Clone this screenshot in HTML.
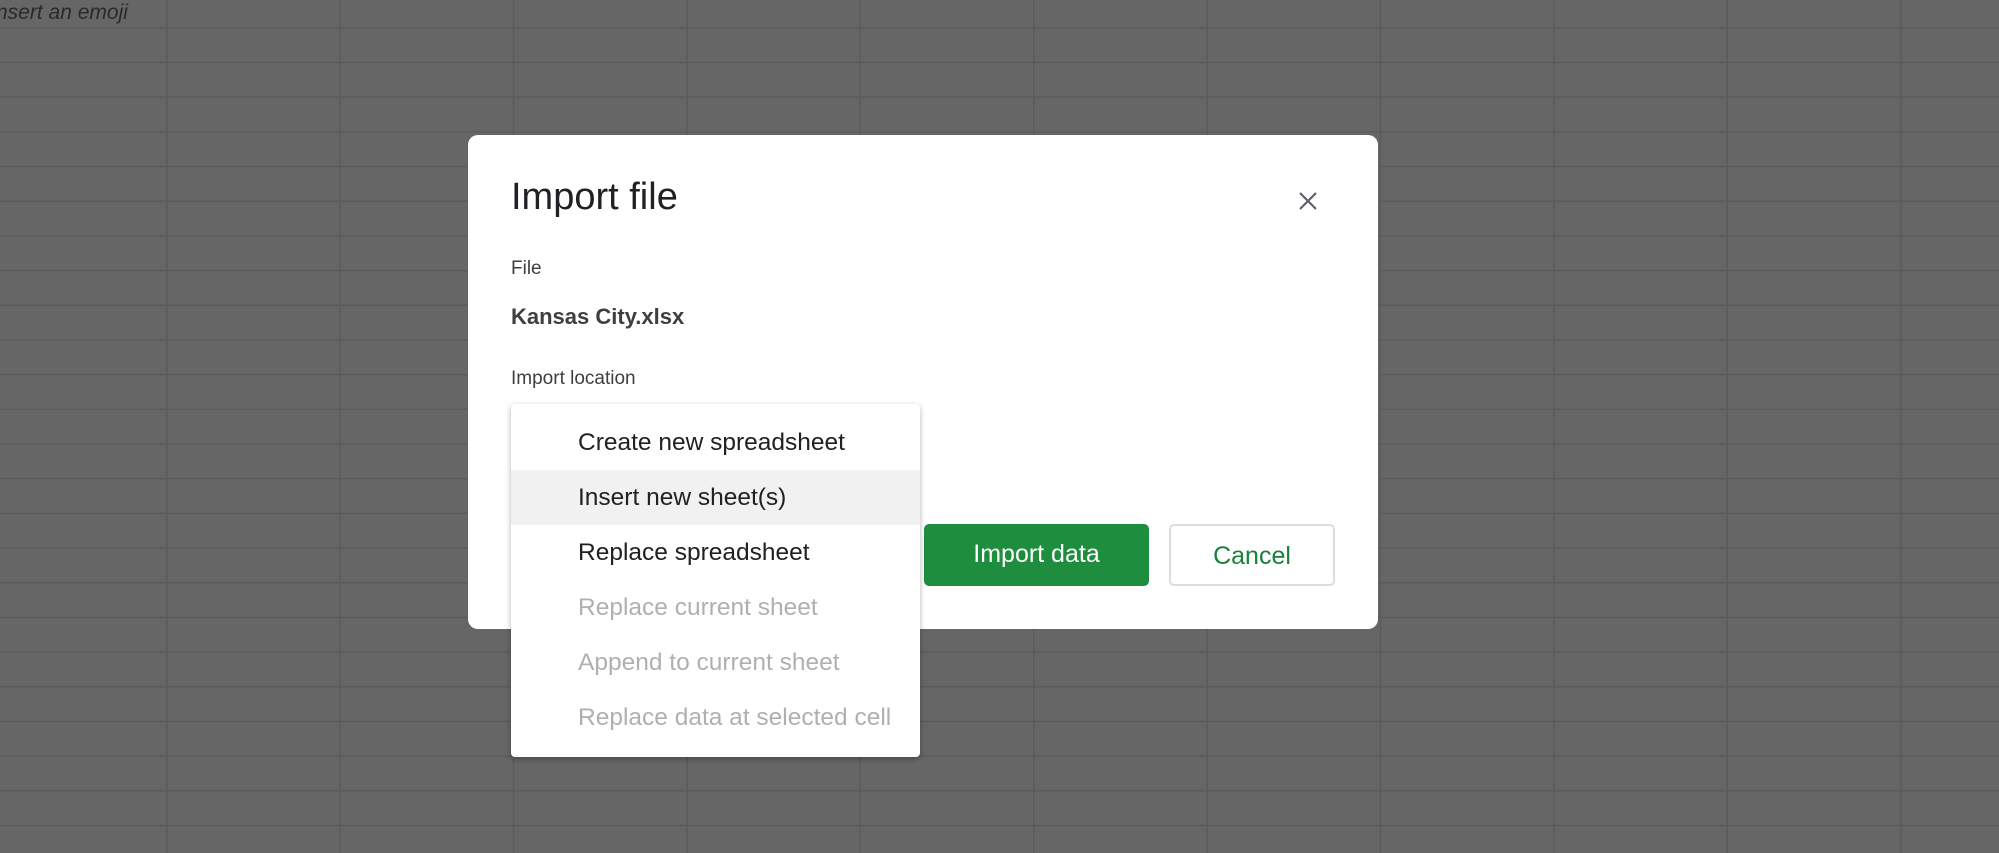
<!DOCTYPE html>
<html><head><style>
html,body{margin:0;padding:0}
body{width:1999px;height:853px;position:relative;overflow:hidden;background:#666;font-family:"Liberation Sans",sans-serif;
background-image:linear-gradient(to right,#5b5b5b 1.5px,transparent 1.5px),linear-gradient(to bottom,#5b5b5b 1.5px,transparent 1.5px);
background-size:173.4px 34.7px;background-position:166px 27px;}
.t{position:absolute;white-space:nowrap}
#dlg{position:absolute;left:468px;top:135px;width:910px;height:494px;background:#fff;border-radius:10px}
#menu{position:absolute;left:511px;top:404px;width:409px;height:353px;background:#fff;border-radius:4px;box-shadow:0 2px 6px rgba(0,0,0,.3)}
.it{position:absolute;left:0;width:409px;height:55px;line-height:55px;padding-left:67px;box-sizing:border-box;font-size:24.5px;color:#202124}
.dis{color:#b0b0b0}
.btn{position:absolute;top:524px;height:62px;line-height:60px;text-align:center;font-size:25px;border-radius:5px;box-sizing:border-box}
</style></head><body>
<div class="t" style="left:-4px;top:1px;font-size:21px;font-style:italic;color:#2a2a2a">nsert an emoji</div>
<div id="dlg"></div>
<div class="t" style="left:511px;top:176px;font-size:38px;color:#202124">Import file</div>
<svg style="position:absolute;left:1298px;top:191px" width="20" height="20"><path d="M2 2L18 18M18 2L2 18" stroke="#5f6368" stroke-width="2.2"/></svg>
<div class="t" style="left:511px;top:258px;font-size:19px;color:#3c4043">File</div>
<div class="t" style="left:511px;top:304px;font-size:22px;font-weight:bold;color:#3c4043">Kansas City.xlsx</div>
<div class="t" style="left:511px;top:368px;font-size:19px;color:#3c4043">Import location</div>
<div class="btn" style="left:924px;width:225px;background:#1e8e3e;color:#fff">Import data</div>
<div class="btn" style="left:1169px;width:166px;border:2px solid #dadce0;color:#188038;background:#fff">Cancel</div>
<div id="menu">
<div class="it" style="top:11px">Create new spreadsheet</div>
<div class="it" style="top:66px;background:#f1f1f1">Insert new sheet(s)</div>
<div class="it" style="top:121px">Replace spreadsheet</div>
<div class="it dis" style="top:176px">Replace current sheet</div>
<div class="it dis" style="top:231px">Append to current sheet</div>
<div class="it dis" style="top:286px">Replace data at selected cell</div>
</div>
</body></html>
